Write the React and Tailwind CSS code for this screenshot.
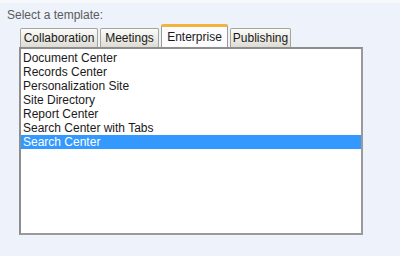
import React from "react";

const tabs = [
  { name: "Collaboration", w: "w-[78px]" },
  { name: "Meetings", w: "w-[59px]" },
  { name: "Enterprise", w: "w-[67px]", active: true },
  { name: "Publishing", w: "w-[61px]" },
];

const items = [
  "Document Center",
  "Records Center",
  "Personalization Site",
  "Site Directory",
  "Report Center",
  "Search Center with Tabs",
  "Search Center",
];

export default function App() {
  return (
    <div
      className="w-[400px] h-[256px] bg-[#edf2fb] border-t-[3px] border-[#f6f8fc] overflow-hidden"
      style={{ fontFamily: '"Liberation Sans", Arial, sans-serif' }}
    >
      {/* label */}
      <div className="pl-[7px] pt-[5px] text-[12px] leading-[14px] text-[#5b5b5b]">
        Select a template:
      </div>

      {/* tab strip */}
      <div className="ml-[20px] mt-[2px] flex items-end gap-[2px] h-[23px] relative z-10">
        {tabs.map((t) =>
          t.active ? (
            <div
              key={t.name}
              className={`${t.w} h-[23px] bg-[#fcfcfe] border-x border-[#9c9c94] border-t-[3px] border-t-[#f0b53c] rounded-t-[2px] flex items-start justify-center pt-[3px] text-[12px] leading-[14px] text-[#1a1a1a]`}
            >
              {t.name}
            </div>
          ) : (
            <div
              key={t.name}
              className={`${t.w} h-[19px] bg-gradient-to-b from-[#fbfbf9] to-[#dedcd4] border border-b-0 border-[#a5a59e] rounded-t-[2px] flex items-center justify-center text-[12px] leading-[14px] text-[#1a1a1a]`}
            >
              {t.name}
            </div>
          )
        )}
      </div>

      {/* list box */}
      <div className="ml-[19px] w-[344px] h-[188px] border-[2px] border-l-[#8e8e8e] border-t-[#8e8e8e] border-r-[#9a9a9a] border-b-[#9a9a9a] bg-white pt-[2px]">
        {items.map((it, i) => {
          const sel = i === items.length - 1;
          return (
            <div
              key={it}
              className={`h-[14px] leading-[14px] text-[12px] pl-[2px] ${
                sel ? "bg-[#3399ff] text-white" : "text-[#1a1a1a]"
              }`}
            >
              {it}
            </div>
          );
        })}
      </div>
    </div>
  );
}
